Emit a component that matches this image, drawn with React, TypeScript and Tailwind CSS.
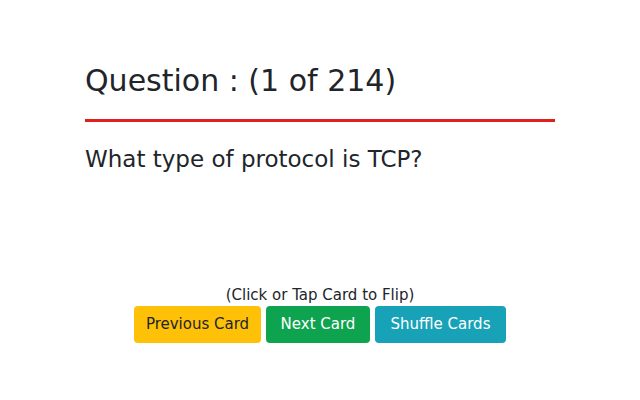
export default function App() {
  const font = { fontFamily: '"Comic Sans MS", "DejaVu Sans", sans-serif' };
  return (
    <div className="h-[400px] w-[640px] bg-white text-[#212529]" style={font}>
      <div className="mx-auto w-[470px] pt-[59px]">
        <h1 className="text-[30px] leading-[44px]">Question : (1 of 214)</h1>
        <div className="mt-[16px] h-[3px] bg-[#e0201e]" />
        <p className="mt-[21px] text-[23px] leading-[32px]">What type of protocol is TCP?</p>
      </div>
      <div className="mt-[110px] flex flex-col items-center">
        <p className="text-[15px] leading-[20px]">(Click or Tap Card to Flip)</p>
        <div className="mt-[1px] flex gap-[5px]">
          <button className="h-[37px] w-[127px] rounded bg-[#ffc107] text-[15px] text-[#212529]">Previous Card</button>
          <button className="h-[37px] w-[104px] rounded bg-[#0ea44f] text-[15px] text-white">Next Card</button>
          <button className="h-[37px] w-[131px] rounded bg-[#17a2b8] text-[15px] text-white">Shuffle Cards</button>
        </div>
      </div>
    </div>
  );
}
